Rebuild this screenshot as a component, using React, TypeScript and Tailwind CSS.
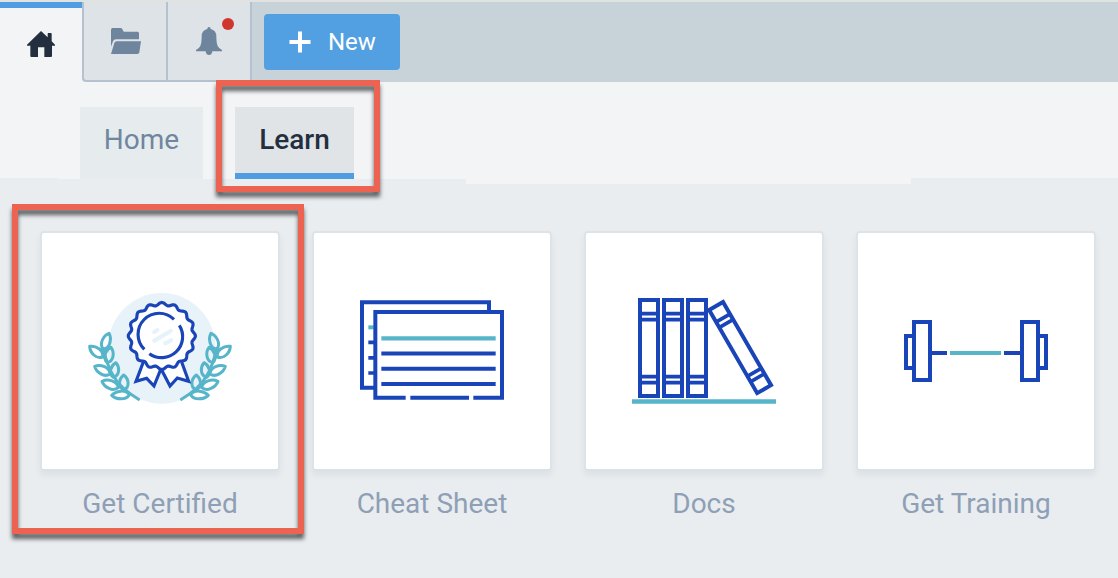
import type { ReactNode } from 'react';

const BLUE = '#1a45b8';
const TEAL = '#57b5ca';

function HomeIcon() {
  return (
    <svg width="28" height="26" viewBox="81 93 84 78" fill="#232f3e">
      <path d="M123 93L143 112V101Q143 99 145 99H153Q155 99 155 101V124L165 134V137H156V168Q156 171 153 171H133V142H114V171H94Q91 171 91 168V137H81V134Z" />
    </svg>
  );
}

function FolderIcon() {
  return (
    <svg width="30" height="26" viewBox="333 87 90 78" fill="#6e859d">
      <path d="M333 143V92Q333 87 338 87H362Q367 87 368 92Q369 98 373 98H413Q417 98 417 103V121H348Q341 121 339 127Z" />
      <path d="M350 127H423L418 160Q417 165 412 165H333L343 132Q345 127 350 127Z" />
    </svg>
  );
}

function BellIcon() {
  return (
    <svg width="26" height="28" viewBox="588 81 78 84" fill="#6e859d">
      <path d="M627 81Q632 81 632 87Q649 91 649 109Q649 130 653 138Q657 146 666 150V154H637Q636 165 627 165Q618 165 617 154H588V150Q597 146 601 138Q605 130 605 109Q605 91 622 87Q622 81 627 81Z" />
    </svg>
  );
}

function leaf(x1: number, y1: number, x2: number, y2: number, w: number) {
  const dx = x2 - x1;
  const dy = y2 - y1;
  const len = Math.hypot(dx, dy);
  const nx = (-dy / len) * w;
  const ny = (dx / len) * w;
  const at = (t: number, s: number) => `${x1 + dx * t + nx * s} ${y1 + dy * t + ny * s}`;
  return `M${x1} ${y1}C${at(0.25, 0.75)} ${at(0.8, 0.95)} ${x2} ${y2}C${at(0.8, -0.95)} ${at(0.25, -0.75)} ${x1} ${y1}Z`;
}

const leaves = [
  leaf(87, 160, 70, 208, 19),
  leaf(29, 199, 68, 231, 19),
  leaf(93, 202, 82, 248, 19),
  leaf(44, 259, 90, 282, 19),
  leaf(108, 248, 100, 292, 19),
  leaf(66, 304, 115, 323, 19),
  leaf(131, 285, 132, 330, 20),
  leaf(95, 346, 148, 344, 18),
].join('');

function Laurel() {
  return (
    <g fill="none" stroke={TEAL} strokeWidth="9">
      <path d={leaves} strokeLinejoin="round" />
      <path d="M70 203Q80 255 102 291Q122 326 179 360" />
    </g>
  );
}

const rosette =
  'M' +
  Array.from({ length: 193 }, (_, i) => {
    const a = (i / 192) * Math.PI * 2;
    const r = 96.5 + 4.2 * Math.cos(a * 16);
    return `${(245.5 + r * Math.sin(a)).toFixed(2)} ${(168 - r * Math.cos(a)).toFixed(2)}`;
  }).join('L') +
  'Z';

function CertifiedArt() {
  return (
    <g transform="translate(80 280) scale(.33333)">
      <ellipse cx="245" cy="205" rx="162" ry="166" fill="#e8f3f9" />
      <Laurel />
      <g transform="translate(480 0) scale(-1 1)">
        <Laurel />
      </g>
      <g stroke={BLUE} strokeWidth="9.5" fill="#fff">
        <path d="M190 246L168 304L200 295L222 318L243 266L270 318L292 294L326 304L305 246" />
        <path d={rosette} />
        <g fill="none">
          <path d="M193 208A63 63 0 0 1 282 118" />
          <path d="M298 136A63 63 0 0 1 208 221" />
        </g>
      </g>
      <path d="M223 156L232 150M223 182L272 153M256 190L273 181" stroke="#e8f3f9" strokeWidth="13" strokeLinecap="round" />
    </g>
  );
}

function CheatSheetArt() {
  return (
    <g transform="translate(350 290) scale(.33333)" fill="none" stroke={BLUE} strokeWidth="12">
      <path d="M76 293H36V37H417V66" />
      <path d="M55 157H76M55 203.500H76M55 249H76" strokeWidth="11" />
      <path d="M55 112H71" stroke={TEAL} />
      <path d="M167 323H76V66H456V323H370M181 323H357" />
      <path d="M94 145H437" stroke={TEAL} strokeWidth="13" />
      <path d="M94 190.500H437M94 236.500H437M94 282H437" />
    </g>
  );
}

function DocsArt() {
  return (
    <g transform="translate(625 290) scale(.33333)" fill="none" stroke={BLUE}>
      {[45, 117, 189].map((x) => (
        <g key={x}>
          <rect x={x} y="30" width="54" height="288" strokeWidth="12" />
          <path d={`M${x} 71H${x + 54}M${x} 89H${x + 54}M${x} 260H${x + 54}M${x} 278H${x + 54}`} strokeWidth="11" />
        </g>
      ))}
      <g transform="translate(245 58) rotate(-30)">
        <rect x="5.5" y="5.5" width="48" height="288" strokeWidth="12" />
        <path d="M5 47H53M5 66H53M5 235H53M5 254H53" strokeWidth="11" />
      </g>
      <path d="M21 334.500H453" stroke={TEAL} strokeWidth="13" />
    </g>
  );
}

function TrainingArt() {
  return (
    <g transform="translate(890 300) scale(.33333)" fill="none" stroke={BLUE} strokeWidth="12">
      <rect x="72" y="66" width="48" height="174" />
      <rect x="396" y="66" width="48" height="174" />
      <path d="M72 108H48V204H72M444 108H468V204H444M120 159H171M342 159H396" />
      <path d="M180 159H333" stroke={TEAL} />
    </g>
  );
}

function Card({ label, viewBox, children }: { label: string; viewBox: string; children: ReactNode }) {
  return (
    <a className="flex w-60 flex-col items-center">
      <div className="h-60 w-60 rounded-[4px] border-2 border-[#dee3e8] border-b-[#dce1e5] bg-white shadow-[0_4px_6px_rgba(40,60,80,0.07)]">
        <svg width="236" height="236" viewBox={viewBox}>
          {children}
        </svg>
      </div>
      <span className="mt-[17px] text-[28px] leading-8 whitespace-nowrap text-[#8e9fb6]">{label}</span>
    </a>
  );
}

function Highlight({ className }: { className: string }) {
  return (
    <div
      className={`pointer-events-none absolute border-6 border-[#ec6352] drop-shadow-[0_5.5px_2px_rgba(0,0,0,0.6)] ${className}`}
    />
  );
}

export default function App() {
  return (
    <div className="relative h-[578px] w-[1118px] overflow-hidden bg-[#e9edf0] font-['Roboto',sans-serif]">
      <header className="flex h-[82px] border-t-2 border-[#e0e3e0] bg-[#c8d3d9]">
        <div className="flex w-[82px] items-center justify-center border-t-6 border-[#509ee1] bg-[#f3f4f6] pb-[2px]">
          <HomeIcon />
        </div>
        <div className="flex w-[170px] bg-[#f3f4f6]">
          <div className="flex w-[170px] rounded-bl-[4px] border-b-2 border-l-2 border-[#b5c1cf] bg-[#dee3e7]">
            <div className="flex w-[84px] items-center justify-center border-r-2 border-[#b5c1cf] pl-[2px]">
              <FolderIcon />
            </div>
            <div className="relative flex w-[84px] items-center justify-center border-r-2 border-[#b5c1cf]">
              <BellIcon />
              <span className="absolute top-4 right-4 h-3 w-3 rounded-full bg-[#cf372e]" />
            </div>
          </div>
        </div>
        <button className="mt-3 ml-3 flex h-14 w-[136px] items-center rounded-[4px] bg-[#529fe2] pl-[25px] text-2xl text-white">
          <svg width="22" height="22" viewBox="0 0 22 22" fill="none" stroke="#fff" strokeWidth="4">
            <path d="M11 .5V21.500M.5 11H21.500" />
          </svg>
          <span className="ml-[17px]">New</span>
        </button>
      </header>

      <div className="flex h-24">
        <div className="h-24 w-[58px] bg-[#f3f4f6]" />
        <nav className="flex h-[97px] w-[408px] items-end gap-8 bg-[#f3f4f6] pl-[22px] text-[28px] leading-8">
          <a className="flex h-[72px] w-[123px] items-center justify-center bg-[#e6ebee] pb-1.5 text-[#70869f]">Home</a>
          <a className="flex h-[72px] w-[119px] items-center justify-center border-b-6 border-[#509ee1] bg-[#e0e4e7] font-medium text-[#232f3e]">
            Learn
          </a>
        </nav>
        <div className="h-[102px] w-[445px] bg-[#f3f4f6]" />
        <div className="h-24 flex-1 bg-[#f3f4f6]" />
      </div>

      <main className="flex gap-8 pt-[53px] pl-10">
        <Card label="Get Certified" viewBox="42 233 236 236">
          <CertifiedArt />
        </Card>
        <Card label="Cheat Sheet" viewBox="314 233 236 236">
          <CheatSheetArt />
        </Card>
        <Card label="Docs" viewBox="586 233 236 236">
          <DocsArt />
        </Card>
        <Card label="Get Training" viewBox="858 233 236 236">
          <TrainingArt />
        </Card>
      </main>

      <Highlight className="top-20 left-[216px] h-28 w-[164px]" />
      <Highlight className="top-[204px] left-3 h-[330px] w-[292px]" />
    </div>
  );
}
